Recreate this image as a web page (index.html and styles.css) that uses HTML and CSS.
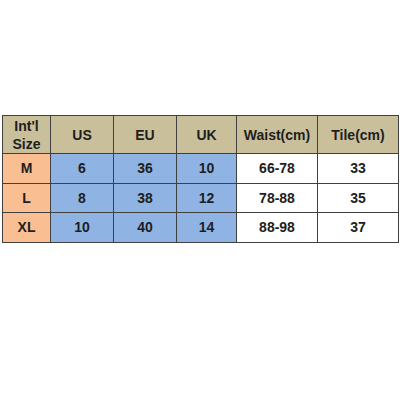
FILE: index.html
```html
<!DOCTYPE html>
<html>
<head>
<meta charset="utf-8">
<link rel="stylesheet" href="styles.css">
</head>
<body>
<div class="page">
<table class="chart">
  <colgroup>
    <col class="c1"><col class="c2"><col class="c3"><col class="c4"><col class="c5"><col class="c6">
  </colgroup>
  <tr class="head">
    <th>Int'l<br>Size</th><th>US</th><th>EU</th><th>UK</th><th>Waist(cm)</th><th>Tile(cm)</th>
  </tr>
  <tr class="r1">
    <td class="size">M</td><td class="blue">6</td><td class="blue">36</td><td class="blue">10</td><td>66-78</td><td>33</td>
  </tr>
  <tr class="r2">
    <td class="size">L</td><td class="blue">8</td><td class="blue">38</td><td class="blue">12</td><td>78-88</td><td>35</td>
  </tr>
  <tr class="r3">
    <td class="size">XL</td><td class="blue">10</td><td class="blue">40</td><td class="blue">14</td><td>88-98</td><td>37</td>
  </tr>
</table>
</div>
</body>
</html>
```
FILE: styles.css
```css
html, body {
  margin: 0;
  padding: 0;
  background: #ffffff;
}
.page {
  padding: 115px 0 0 2px;
}
.chart {
  border-collapse: collapse;
  table-layout: fixed;
  width: 396px;
  font-family: "Liberation Sans", Arial, sans-serif;
  font-weight: bold;
  font-size: 14px;
  color: #1e1e1e;
}
.c1 { width: 48px; }
.c2 { width: 63px; }
.c3 { width: 63px; }
.c4 { width: 60px; }
.c5 { width: 81px; }
.c6 { width: 81px; }
.chart th, .chart td {
  border: 1px solid #404040;
  text-align: center;
  vertical-align: middle;
  padding: 0;
  line-height: 17px;
}
.chart th {
  background: #c9c09b;
  font-weight: bold;
}
.head th { line-height: 18px; padding-top: 1px; }
.head { height: 37px; }
.r1 { height: 30px; }
.r2 { height: 29px; }
.r3 { height: 30px; }
.size { background: #f9be92; }
.blue { background: #8fb4e3; }
```
